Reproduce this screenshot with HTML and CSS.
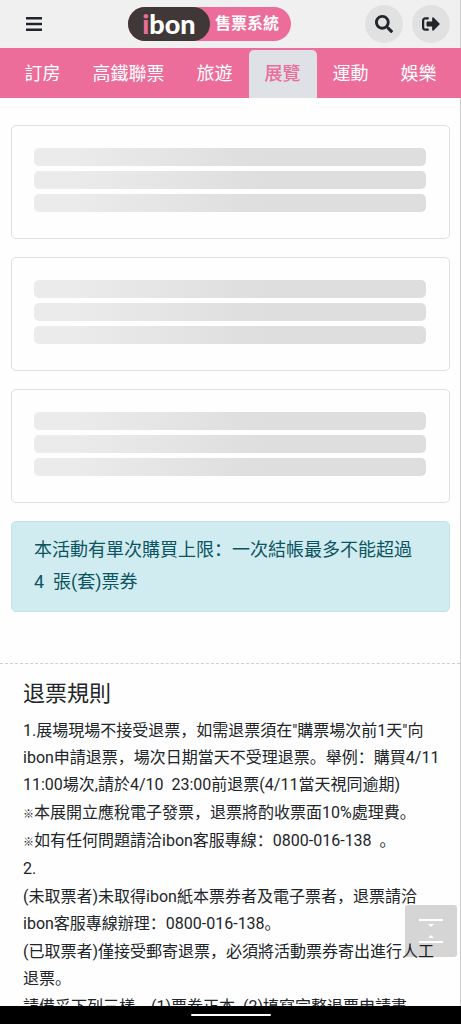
FILE: index.html
```html
<!DOCTYPE html>
<html lang="zh-Hans">
<head>
    <meta charset="UTF-8">
    <meta name="viewport" content="width=device-width, initial-scale=1.0">
    <title>ibon 售票系統</title>
    <link rel="stylesheet" href="styles.css">
</head>
<body>
    <!-- Header -->
    <header class="header">
        <button class="menu-button" type="button" aria-label="選單">
            <svg width="16" height="14" viewBox="0 0 16 14"><path d="M0 1.2h16M0 7h16M0 12.8h16" stroke="currentColor" stroke-width="2.4"/></svg>
        </button>
        <a class="logo" href="#">
            <span class="logo-name"><span class="logo-i">i</span>bon</span>
            <span class="logo-title">售票系統</span>
        </a>
        <div class="header-actions">
            <button class="round-button" type="button" aria-label="搜尋">
                <svg width="18" height="18" viewBox="0 0 512 512"><path fill="currentColor" d="M505 442.7L405.3 343c-4.5-4.5-10.6-7-17-7H372c27.6-35.3 44-79.7 44-128C416 93.1 322.9 0 208 0S0 93.1 0 208s93.1 208 208 208c48.3 0 92.7-16.4 128-44v16.3c0 6.4 2.5 12.5 7 17l99.7 99.7c9.4 9.4 24.6 9.4 33.9 0l28.3-28.3c9.4-9.4 9.4-24.6.1-34zM208 336c-70.7 0-128-57.2-128-128 0-70.7 57.2-128 128-128 70.7 0 128 57.2 128 128 0 70.7-57.2 128-128 128z"/></svg>
            </button>
            <button class="round-button" type="button" aria-label="登出">
                <svg width="18" height="18" viewBox="0 0 512 512"><path fill="currentColor" d="M497 273L329 441c-15 15-41 4.5-41-17v-96H152c-13.3 0-24-10.7-24-24v-96c0-13.3 10.7-24 24-24h136V88c0-21.4 25.9-32 41-17l168 168c9.3 9.4 9.3 24.6 0 34zM192 436v-40c0-6.6-5.4-12-12-12H96c-17.7 0-32-14.3-32-32V160c0-17.7 14.3-32 32-32h84c6.6 0 12-5.4 12-12V76c0-6.6-5.4-12-12-12H96c-53 0-96 43-96 96v192c0 53 43 96 96 96h84c6.6 0 12-5.4 12-12z"/></svg>
            </button>
        </div>
    </header>

    <!-- Category tabs -->
    <nav class="tabs">
        <a href="#">訂房</a>
        <a href="#">高鐵聯票</a>
        <a href="#">旅遊</a>
        <a class="active" href="#">展覽</a>
        <a href="#">運動</a>
        <a href="#">娛樂</a>
    </nav>

    <main class="content">
        <!-- Loading placeholders -->
        <div class="cards">
            <div class="card">
                <div class="bar"></div>
                <div class="bar"></div>
                <div class="bar"></div>
            </div>
            <div class="card">
                <div class="bar"></div>
                <div class="bar"></div>
                <div class="bar"></div>
            </div>
            <div class="card">
                <div class="bar"></div>
                <div class="bar"></div>
                <div class="bar"></div>
            </div>
            <div class="notice">本活動有單次購買上限：一次結帳最多不能超過 4&nbsp; 張(套)票券</div>
        </div>

        <!-- Refund rules -->
        <section class="rules">
            <h2>退票規則</h2>
            <p>1.展場現場不接受退票，如需退票須在"購票場次前1天"向<br>ibon申請退票，場次日期當天不受理退票。舉例：購買4/11<br>11:00場次,請於4/10&nbsp; 23:00前退票(4/11當天視同逾期)</p>
            <p><span class="mark">※</span>本展開立應稅電子發票，退票將酌收票面10%處理費。</p>
            <p><span class="mark">※</span>如有任何問題請洽ibon客服專線：0800-016-138&nbsp; 。</p>
            <p>2.</p>
            <p>(未取票者)未取得ibon紙本票券者及電子票者，退票請洽<br>ibon客服專線辦理：0800-016-138。</p>
            <p>(已取票者)僅接受郵寄退票，必須將活動票券寄出進行人工<br>退票。</p>
            <p>請備妥下列三樣，(1)票券正本&nbsp; (2)填寫完整退票申請書</p>
        </section>
    </main>

    <button class="scroll-button" type="button" aria-label="捲動頁面">
        <svg width="24" height="26" viewBox="0 0 24 26" fill="#fff"><path d="M0 1h24v2H0zM0 23h24v2H0zM9 6h6l-3 3zM9 20h6l-3-3z"/></svg>
    </button>

    <!-- Phone gesture bar -->
    <footer class="gesture-bar"><span></span></footer>
</body>
</html>
```
FILE: styles.css
```css
* {
    box-sizing: border-box;
}

body {
    display: flex;
    flex-direction: column;
    height: 100vh;
    margin: 0;
    background-color: #fefefe;
    color: #212529;
    font-family: Roboto, "Noto Sans CJK SC", sans-serif;
    font-size: 16px;
    line-height: 27px;
    overflow: hidden;
}

button {
    display: flex;
    justify-content: center;
    align-items: center;
    padding: 0;
    border: none;
    background: none;
    color: #212529;
    cursor: pointer;
}

a {
    text-decoration: none;
}

/* Header */
.header {
    display: flex;
    flex: none;
    justify-content: space-between;
    align-items: center;
    height: 48px;
    padding: 0 10px 0 14px;
    background-color: #f0f0f0;
    border-right: 1px solid #ccc;
}

.menu-button {
    width: 40px;
    height: 40px;
}

.logo {
    display: flex;
    height: 34px;
    border-radius: 17px;
    background-color: #ec6d9a;
    color: white;
    line-height: 34px;
}

.logo-name {
    width: 82px;
    border-radius: 17px;
    background-color: #403837;
    font-family: Lato, sans-serif;
    font-size: 27px;
    font-weight: 900;
    text-align: center;
}

.logo-i {
    color: #ec6d9a;
}

.logo-title {
    padding: 0 12px 0 5px;
    font-weight: 700;
}

.header-actions {
    display: flex;
    gap: 9px;
}

.round-button {
    width: 38px;
    height: 38px;
    border-radius: 50%;
    background-color: #e1e1e1;
}

/* Category tabs */
.tabs {
    display: flex;
    flex: none;
    justify-content: center;
    height: 50px;
    padding-top: 2px;
    background-color: #ec6d9a;
}

.tabs a {
    padding: 0 16px;
    color: white;
    font-size: 18px;
    line-height: 48px;
    white-space: nowrap;
}

.tabs .active {
    border-radius: 5px 5px 0 0;
    background-color: #dee1e5;
    color: #ec6d9a;
    font-weight: 500;
}

/* Page content */
.content {
    flex: 1;
    min-height: 0;
    padding-top: 27px;
    border-right: 1px solid #ccc;
    overflow-y: auto;
    scrollbar-width: none;
}

.cards {
    display: flex;
    flex-direction: column;
    gap: 18px;
    margin: 0 10px 0 11px;
}

.card {
    display: flex;
    flex-direction: column;
    gap: 5px;
    padding: 22px 23px 26px 22px;
    border: 1px solid #dfdfdf;
    border-radius: 5px;
}

.bar {
    height: 18px;
    border-radius: 5px;
    background: linear-gradient(90deg, #ebebeb 10%, #dedede 58%);
}

.notice {
    padding: 12px 22px 13px;
    border: 1px solid #bee5eb;
    border-radius: 5px;
    background-color: #d1ecf1;
    color: #0c5460;
    font-size: 18px;
    line-height: 32px;
}

/* Refund rules */
.rules {
    margin-top: 51px;
    padding: 16px 12px 16px 23px;
    border-top: 1px dashed #d0d0d0;
}

.rules h2 {
    margin: 0 0 9px;
    font-size: 22px;
    font-weight: 400;
    line-height: 28px;
}

.rules p {
    margin: 0 0 1px;
}

.mark {
    font-size: 11px;
    line-height: 1;
}

/* Scroll shortcut, stays above the text */
.scroll-button {
    position: fixed;
    right: 4px;
    bottom: 67px;
    width: 52px;
    height: 52px;
    border-radius: 3px;
    background-color: rgba(0, 0, 0, 0.16);
}

/* Phone gesture bar */
.gesture-bar {
    display: flex;
    flex: none;
    justify-content: center;
    align-items: center;
    height: 18px;
    background-color: black;
}

.gesture-bar span {
    width: 80px;
    height: 2px;
    border-radius: 1px;
    background-color: white;
}
```
